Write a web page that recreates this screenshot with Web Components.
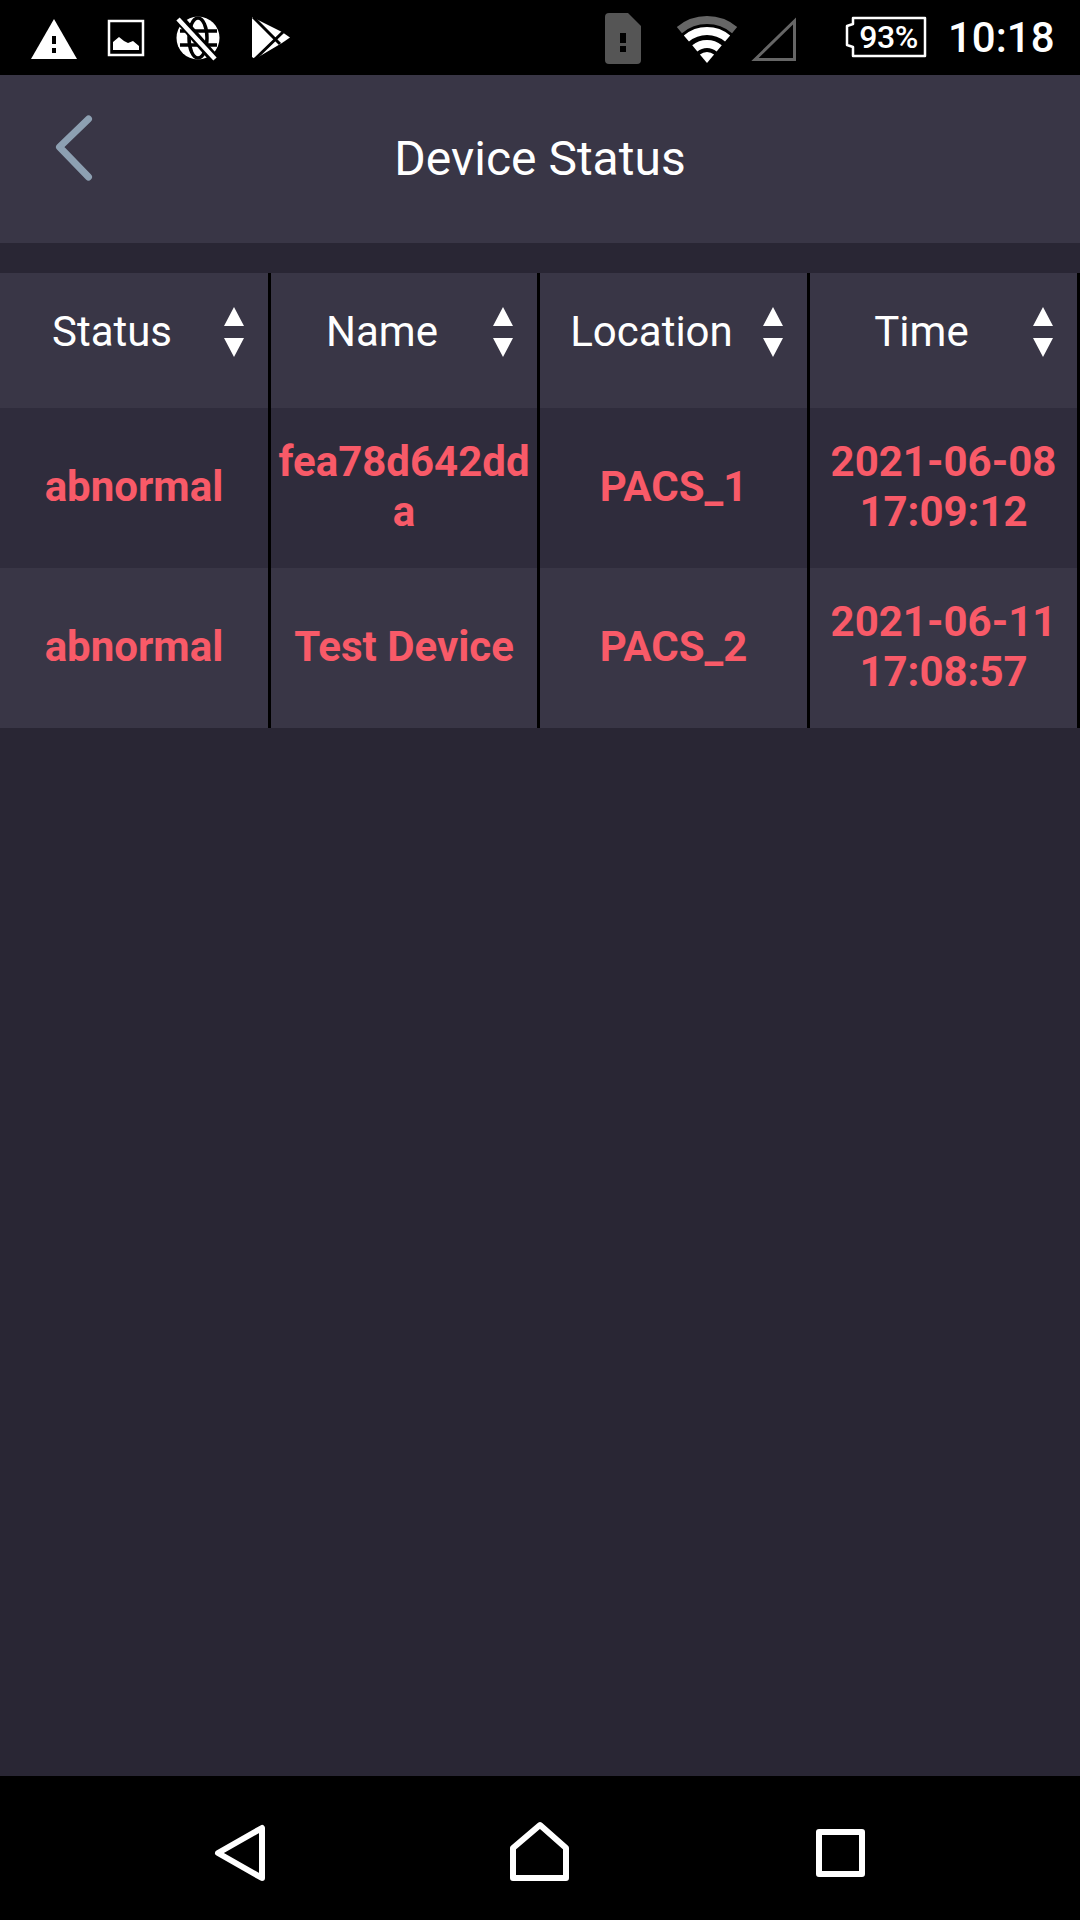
<!DOCTYPE html>
<html lang="en">
<head>
<meta charset="utf-8">
<title>Device Status</title>
<style>
  html, body { margin: 0; padding: 0; background: #292634; }
  body { width: 1080px; height: 1920px; display: flex; flex-direction: column; font-family: Roboto, "Liberation Sans", sans-serif; }
  device-table { flex: 1; }
</style>
</head>
<body>
<status-bar battery="93%" time="10:18"></status-bar>
<app-header>Device Status</app-header>
<device-table>
  <device-row head>
    <sort-head>Status</sort-head>
    <sort-head>Name</sort-head>
    <sort-head>Location</sort-head>
    <sort-head>Time</sort-head>
  </device-row>
  <device-row>
    <device-cell>abnormal</device-cell>
    <device-cell>fea78d642dda</device-cell>
    <device-cell>PACS_1</device-cell>
    <device-cell>2021-06-08 17:09:12</device-cell>
  </device-row>
  <device-row alt>
    <device-cell>abnormal</device-cell>
    <device-cell>Test Device</device-cell>
    <device-cell>PACS_2</device-cell>
    <device-cell>2021-06-11 17:08:57</device-cell>
  </device-row>
</device-table>
<nav-bar></nav-bar>

<script>
// ================================================
// Markup
// ================================================
const STATUS_BAR = `
<style>
  :host { display: flex; height: 75px; background: #000; color: #fff; align-items: center; }
  svg { display: block; flex: none; }
  .system { margin-left: auto; }
  .battery { position: relative; width: 84px; height: 75px; margin-left: 44px; flex: none; }
  .battery span { position: absolute; left: 9px; top: 18px; width: 71px; text-align: center; font: 500 32px/38px Roboto, sans-serif; letter-spacing: -0.5px; }
  .time { width: 105px; margin: 0 27px 0 20px; font: 500 42px/75px Roboto, sans-serif; flex: none; }
</style>
<svg width="300" height="75" viewBox="0 0 300 75">
  <path d="M31 59 54 19 77 59Z" fill="#fff"/>
  <path d="M52 36h4v8h-4zM52 48h4v5h-4z" fill="#000"/>
  <rect x="109" y="21" width="34" height="34" fill="none" stroke="#fff" stroke-width="2.5"/>
  <path d="M113 50V42L119 37 124 41 128 43 133 41 139 46V50Z" fill="#fff"/>
  <circle cx="198" cy="38" r="21.5" fill="#fff"/>
  <g fill="none" stroke="#000" stroke-width="3.5">
    <ellipse cx="198" cy="38" rx="9" ry="20"/>
    <path d="M180 31H217M180 45H217"/>
    <path d="M176 15 218 63" stroke-width="10"/>
  </g>
  <path d="M178 19 215 59" stroke="#fff" stroke-width="4.5"/>
  <path d="M252 17 282 32 290 37.500 282 43 255 59 252 57Z" fill="#fff"/>
  <path d="M253 17 280 44M254 60 283 32" stroke="#000" stroke-width="3" fill="none"/>
</svg>
<svg class="system" width="200" height="75" viewBox="600 0 200 75">
  <path d="M609 13H628L641 26V60A4 4 0 0 1 637 64H609A4 4 0 0 1 605 60V17A4 4 0 0 1 609 13Z" fill="#555"/>
  <path d="M620 33h6v10h-6zM620 46h6v6h-6z" fill="#000"/>
  <g transform="translate(707 63)" fill="none" stroke-width="8">
    <path d="M-27.6 -32.9A43 43 0 0 1 27.6 -32.9" stroke="#666"/>
    <path d="M-20.6 -24.5A32 32 0 0 1 20.6 -24.5" stroke="#fff"/>
    <path d="M-12.2 -14.6A19 19 0 0 1 12.2 -14.6" stroke="#fff"/>
    <path d="M0 0-7.1 -8.4A11 11 0 0 1 7.1 -8.4Z" fill="#fff" stroke="none"/>
  </g>
  <path d="M794.5 21V59.5H755Z" fill="none" stroke="#666" stroke-width="3"/>
</svg>
<div class="battery">
  <svg width="84" height="75" viewBox="844 0 84 75">
    <path d="M853 18H925V56H853V47L847 45V26L853 24Z" fill="none" stroke="#fff" stroke-width="2.5" stroke-linejoin="round"/>
  </svg>
  <span id="level"></span>
</div>
<div class="time" id="time"></div>
`;

const APP_HEADER = `
<style>
  :host { display: grid; grid-template-columns: 1fr auto 1fr; align-items: center; height: 168px; background: #393646; color: #fff; }
  svg { display: block; align-self: start; }
  .title { font-size: 48px; line-height: 60px; }
</style>
<svg width="100" height="168" viewBox="0 75 100 168">
  <path d="M88.500 119 59.500 147 88.500 177" fill="none" stroke="#8da0b2" stroke-width="7" stroke-linecap="round" stroke-linejoin="round"/>
</svg>
<div class="title"><slot></slot></div>
<div></div>
`;

const DEVICE_TABLE = `
<style>
  :host { display: block; padding-top: 30px; background: #292634; }
</style>
<slot></slot>
`;

const DEVICE_ROW = `
<style>
  :host { display: grid; grid-template-columns: 271px 269px 270px 270px; height: 160px; background: #2f2c3c; }
  :host([alt]) { background: #393646; }
  :host([head]) { height: 135px; background: #393646; }
</style>
<slot></slot>
`;

const SORT_HEAD = `
<style>
  :host { display: flex; align-items: center; padding: 0 24px 18px 0; border-right: 3px solid #000; color: #fff; }
  .label { flex: 1; text-align: center; font-size: 42px; line-height: 50px; }
  svg { display: block; flex: none; }
</style>
<div class="label"><slot></slot></div>
<svg width="20" height="50" viewBox="0 0 20 50">
  <path d="M10 0 20 19H0ZM0 31H20L10 50Z" fill="#fff"/>
</svg>
`;

const DEVICE_CELL = `
<style>
  :host { display: flex; align-items: center; justify-content: center; padding: 0 7px 2px; border-right: 3px solid #000; color: #f85a68; min-width: 0; }
  .value { text-align: center; font-size: 42px; font-weight: 700; line-height: 50px; overflow-wrap: anywhere; min-width: 0; }
</style>
<div class="value"><slot></slot></div>
`;

const NAV_BAR = `
<style>
  :host { display: flex; justify-content: center; height: 144px; background: #000; }
  svg { display: block; }
  path, rect { fill: none; stroke: #fff; stroke-width: 6; stroke-linejoin: round; }
</style>
<svg width="300" height="144" viewBox="90 1776 300 144"><path d="M218 1853 262 1828V1878Z"/></svg>
<svg width="300" height="144" viewBox="390 1776 300 144"><path d="M513 1878V1848L540 1825 566 1848V1878Z"/></svg>
<svg width="300" height="144" viewBox="690 1776 300 144"><rect x="819" y="1832" width="43" height="42"/></svg>
`;


// ================================================
// Web Components
// ================================================
class ShadowElement extends HTMLElement {
  constructor(html) {
    super();
    this.root = this.attachShadow({ mode: 'open' });
    this.root.innerHTML = html;
  }
}

class StatusBar extends ShadowElement {
  constructor() { super(STATUS_BAR); }

  connectedCallback() {
    this.root.getElementById('level').textContent = this.getAttribute('battery');
    this.root.getElementById('time').textContent = this.getAttribute('time');
  }
}

class AppHeader extends ShadowElement { constructor() { super(APP_HEADER); } }
class DeviceTable extends ShadowElement { constructor() { super(DEVICE_TABLE); } }
class DeviceRow extends ShadowElement { constructor() { super(DEVICE_ROW); } }
class SortHead extends ShadowElement { constructor() { super(SORT_HEAD); } }
class DeviceCell extends ShadowElement { constructor() { super(DEVICE_CELL); } }
class NavBar extends ShadowElement { constructor() { super(NAV_BAR); } }

customElements.define('status-bar', StatusBar);
customElements.define('app-header', AppHeader);
customElements.define('device-table', DeviceTable);
customElements.define('device-row', DeviceRow);
customElements.define('sort-head', SortHead);
customElements.define('device-cell', DeviceCell);
customElements.define('nav-bar', NavBar);
</script>
</body>
</html>
